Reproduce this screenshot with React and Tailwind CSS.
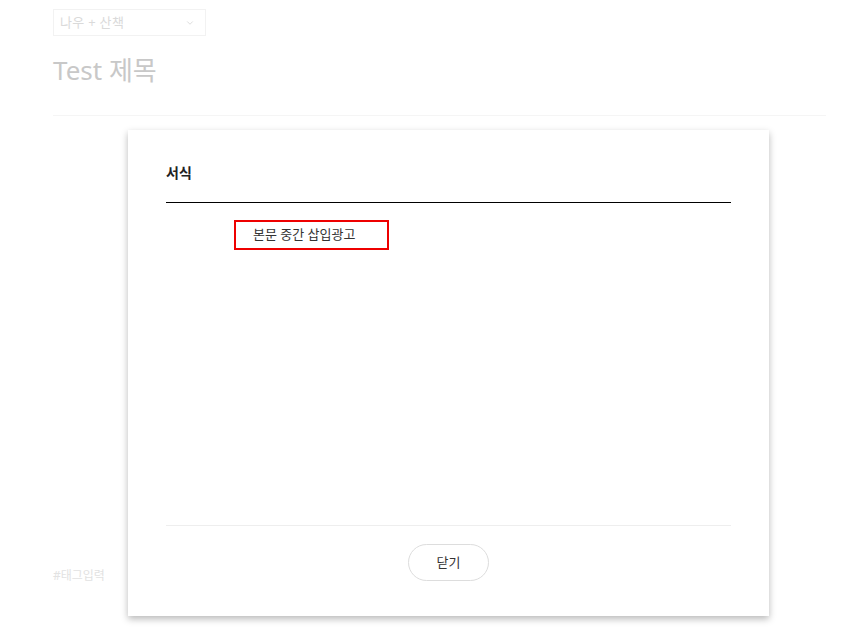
import { ChevronDown } from 'lucide-react'

const font = { fontFamily: '"Noto Sans", "Noto Sans CJK KR", sans-serif' }

function Editor() {
  return (
    <div className="px-[53px] pt-[9px] w-[879px]">
      {/* Category select */}
      <div className="flex items-center justify-between w-[153px] h-[27px] border border-[#f2f2f2] pl-[6px] pr-[10px]">
        <span className="text-[13px] text-[#dadada] tracking-[0.3px]">나우 + 산책</span>
        <ChevronDown size={10} className="text-[#d6d6d6]" />
      </div>

      {/* Title */}
      <h1 className="mt-[14px] text-[26px] leading-[40px] text-[#c8c8c8]">Test 제목</h1>

      <div className="mt-[25px] border-t border-[#f5f5f5]" />

      <div className="h-[451px]" />

      {/* Tags */}
      <p className="text-[12px] text-[#e2e2e2]">#태그입력</p>
    </div>
  )
}

function FormatModal() {
  return (
    <div className="absolute left-[128px] top-[130px] w-[641px] h-[486px] bg-white shadow-[0_3px_7px_rgba(0,0,0,0.28)] flex flex-col px-[38px]">
      <h2 className="mt-[33px] text-[14px] leading-[20px] font-bold text-[#222]">서식</h2>
      <div className="mt-[19px] border-t border-black" />

      <div className="flex-1 pt-[17px] pl-[68px]">
        <button className="flex items-center w-[155px] h-[30px] border-2 border-[#ee0000] pl-[17px] text-[13px] text-[#333]">
          본문 중간 삽입광고
        </button>
      </div>

      <div className="border-t border-[#eeeeee]" />
      <div className="flex justify-center pt-[18px] pb-[35px]">
        <button className="w-[81px] h-[37px] rounded-full border border-[#dddddd] text-[13px] text-[#333]">
          닫기
        </button>
      </div>
    </div>
  )
}

export default function App() {
  return (
    <div className="relative w-[847px] h-[639px] bg-white overflow-hidden" style={font}>
      <Editor />
      <FormatModal />
    </div>
  )
}
